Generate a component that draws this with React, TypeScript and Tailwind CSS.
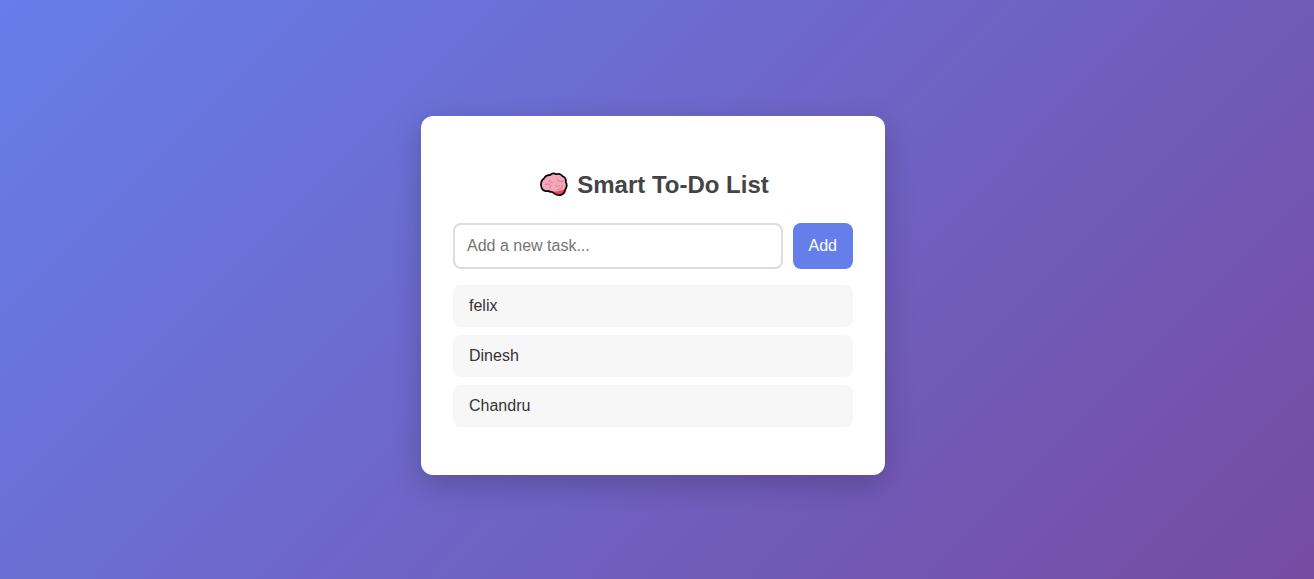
import { useState } from "react";
import type { FormEvent } from "react";

const BRAIN_OUTLINE =
  "M7.2 7.2C8.2 5 10.6 3.8 13 4.2C14.8 2.4 17.4 2.2 19.2 3.2C21.8 2.4 24.4 3.4 25.6 5.2C28 6.2 29.2 8.4 28.8 10.8C30 13.2 29.8 16.2 28.4 18.2C28 21 26.4 23.2 24.2 23.9C21.6 24.8 17.6 23.6 15.4 21C13.8 21 12.4 20.8 11.4 20C8.4 20.4 5.4 19.2 4.6 16.8C3.2 13.6 4 9.2 7.2 7.2Z";

function BrainIcon() {
  return (
    <svg viewBox="0 0 32 28" className="mr-2 h-7 w-8 shrink-0" aria-hidden="true">
      <path d={BRAIN_OUTLINE} fill="#f5a8ba" />
      <path
        d="M15.6 20.8C20 20.6 24.6 20.2 28.6 17.6C28.2 20.8 26.4 23.2 24.2 23.9C21.6 24.8 17.6 23.6 15.6 20.8Z"
        fill="#f0405a"
      />
      <path
        d="M12.2 8.6C12.6 10.4 13.6 11.4 15.2 11.6M8.4 13.6C10.4 12.6 12.6 13.2 13.6 15C13.8 16.4 13.2 17.6 12.2 18.4M20.4 8.6C21.8 10.6 24.6 10.8 26.8 9.6M18.6 14.2C19.6 15.4 21.4 15.4 22.6 14.4M25.4 13.8C25.4 16.4 23.4 18.2 20.6 18.4"
        fill="none"
        stroke="#e5859a"
        strokeWidth="1.2"
        strokeLinecap="round"
      />
      <path d={BRAIN_OUTLINE} fill="none" stroke="#000" strokeWidth="1.7" strokeLinejoin="round" />
    </svg>
  );
}

export default function App() {
  const [tasks, setTasks] = useState(["felix", "Dinesh", "Chandru"]);
  const [draft, setDraft] = useState("");

  const addTask = (event: FormEvent) => {
    event.preventDefault();
    const text = draft.trim();
    if (!text) return;
    setTasks([...tasks, text]);
    setDraft("");
  };

  return (
    <div className="flex min-h-screen items-center justify-center bg-[linear-gradient(135deg,#667eea,#764ba2)] pt-3 pr-2 font-['Liberation_Sans',Arial,sans-serif] text-[#333]">
      <main className="w-full max-w-[464px] rounded-xl bg-white px-8 py-12 shadow-[0_10px_30px_rgba(0,0,0,0.2)]">
        <h1 className="mt-1 mb-[22px] flex items-center justify-center text-2xl leading-[33px] font-bold text-[#444]">
          <BrainIcon />
          Smart To-Do List
        </h1>
        <form onSubmit={addTask} className="mb-4 flex gap-2.5">
          <input
            type="text"
            aria-label="New task"
            placeholder="Add a new task..."
            value={draft}
            onChange={(event) => setDraft(event.target.value)}
            className="h-[46px] min-w-0 flex-1 rounded-lg border-2 border-[#ddd] px-3 text-base outline-none placeholder:text-[#757575] focus:border-[#667eea]"
          />
          <button type="submit" className="cursor-pointer rounded-lg bg-[#667eea] px-4 text-base text-white hover:bg-[#5a67d8]">
            Add
          </button>
        </form>
        <ul className="flex flex-col gap-2">
          {tasks.map((task, index) => (
            <li key={index} className="rounded-lg bg-[#f7f7f7] px-4 py-3 text-base leading-[18px]">
              {task}
            </li>
          ))}
        </ul>
      </main>
    </div>
  );
}
